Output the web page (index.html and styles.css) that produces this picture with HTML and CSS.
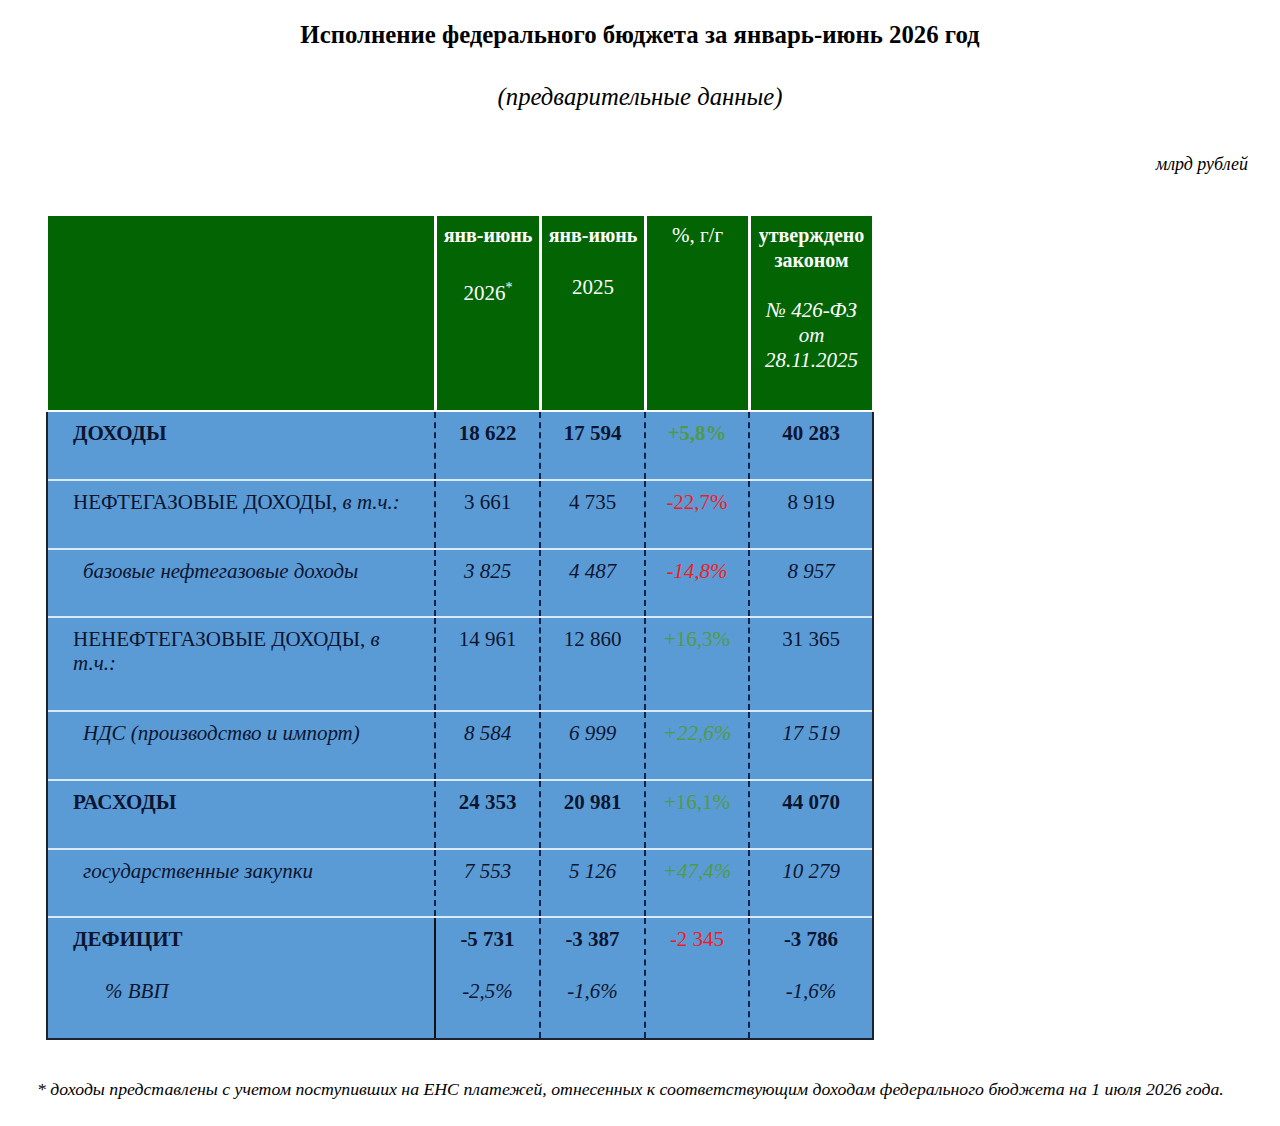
FILE: index.html
```html
<!DOCTYPE html>
<html lang="ru">
<head>
<meta charset="utf-8">
<title>Исполнение федерального бюджета</title>
<link rel="stylesheet" href="styles.css">
</head>
<body>
<div class="page">
  <h1 class="title">Исполнение федерального бюджета за январь-июнь 2026 год</h1>
  <p class="subtitle">(предварительные данные)</p>
  <p class="units">млрд рублей</p>

  <div class="table">
    <div class="thead">
      <div class="hcell"></div>
      <div class="hcell">
        <div class="hb">янв-июнь</div>
        <div class="hyear y26">2026<sup class="ast">*</sup></div>
      </div>
      <div class="hcell">
        <div class="hb">янв-июнь</div>
        <div class="hyear y25">2025</div>
      </div>
      <div class="hcell">
        <div class="hr">%, г/г</div>
      </div>
      <div class="hcell">
        <div class="hb">утверждено</div>
        <div class="hb">законом</div>
        <div class="hi first">№ 426-ФЗ</div>
        <div class="hi">от</div>
        <div class="hi">28.11.2025</div>
      </div>
    </div>

    <div class="tbody">
      <div class="row bold">
        <div class="c name">ДОХОДЫ</div>
        <div class="c num">18 622</div>
        <div class="c num">17 594</div>
        <div class="c num up">+5,8%</div>
        <div class="c num">40 283</div>
      </div>
      <div class="row">
        <div class="c name">НЕФТЕГАЗОВЫЕ ДОХОДЫ, <em>в т.ч.:</em></div>
        <div class="c num">3 661</div>
        <div class="c num">4 735</div>
        <div class="c num down">-22,7%</div>
        <div class="c num">8 919</div>
      </div>
      <div class="row italic short">
        <div class="c name sub">базовые нефтегазовые доходы</div>
        <div class="c num">3 825</div>
        <div class="c num">4 487</div>
        <div class="c num down">-14,8%</div>
        <div class="c num">8 957</div>
      </div>
      <div class="row tall">
        <div class="c name">НЕНЕФТЕГАЗОВЫЕ ДОХОДЫ, <em>в</em><br><em>т.ч.:</em></div>
        <div class="c num">14 961</div>
        <div class="c num">12 860</div>
        <div class="c num up">+16,3%</div>
        <div class="c num">31 365</div>
      </div>
      <div class="row italic">
        <div class="c name sub">НДС (производство и импорт)</div>
        <div class="c num">8 584</div>
        <div class="c num">6 999</div>
        <div class="c num up">+22,6%</div>
        <div class="c num">17 519</div>
      </div>
      <div class="row bold">
        <div class="c name">РАСХОДЫ</div>
        <div class="c num">24 353</div>
        <div class="c num">20 981</div>
        <div class="c num up regular">+16,1%</div>
        <div class="c num">44 070</div>
      </div>
      <div class="row italic short">
        <div class="c name sub">государственные закупки</div>
        <div class="c num">7 553</div>
        <div class="c num">5 126</div>
        <div class="c num up">+47,4%</div>
        <div class="c num">10 279</div>
      </div>
      <div class="row deficit">
        <div class="c name">
          <div class="strong">ДЕФИЦИТ</div>
          <div class="second gdp">% ВВП</div>
        </div>
        <div class="c num solid">
          <div class="strong">-5 731</div>
          <div class="second">-2,5%</div>
        </div>
        <div class="c num">
          <div class="strong">-3 387</div>
          <div class="second">-1,6%</div>
        </div>
        <div class="c num">
          <div class="down">-2 345</div>
          <div class="second"></div>
        </div>
        <div class="c num">
          <div class="strong">-3 786</div>
          <div class="second">-1,6%</div>
        </div>
      </div>
    </div>
  </div>

  <p class="note">* доходы представлены с учетом поступивших на ЕНС платежей, отнесенных к соответствующим доходам федерального бюджета на 1 июля 2026 года.</p>
</div>
</body>
</html>
```

FILE: styles.css
```css
html, body {
  margin: 0;
  padding: 0;
  background: #ffffff;
}

.page {
  width: 1280px;
  font-family: "Liberation Serif", "Times New Roman", serif;
  color: #000000;
}

.title {
  margin: 21px 0 0 0;
  font-size: 24.8px;
  line-height: 28px;
  font-weight: bold;
  text-align: center;
}

.subtitle {
  margin: 34px 0 0 0;
  font-size: 24.7px;
  line-height: 28px;
  font-style: italic;
  text-align: center;
}

.units {
  margin: 42px 0 0 0;
  padding-right: 32px;
  font-size: 18px;
  line-height: 22px;
  font-style: italic;
  text-align: right;
}

.table {
  margin: 41px 0 0 46px;
  width: 828px;
}

.thead {
  display: grid;
  grid-template-columns: 386px 102px 102px 101px 121px;
  column-gap: 3px;
  height: 194px;
  margin: 0 2px 2px 2px;
}

.hcell {
  background: #036403;
  color: #ffffff;
  text-align: center;
  padding-top: 7px;
}

.hb {
  font-size: 20px;
  line-height: 25px;
  font-weight: bold;
}

.hr {
  font-size: 21px;
  line-height: 25px;
}

.hi {
  font-size: 21px;
  line-height: 25px;
  font-style: italic;
}

.hi.first {
  margin-top: 25px;
}

.hyear {
  font-size: 21px;
  line-height: 25px;
}

.y26 {
  margin-top: 33px;
}

.y25 {
  margin-top: 27px;
}

.ast {
  font-size: 14px;
  line-height: 0;
  vertical-align: 8px;
}

.tbody {
  background: #5b9bd5;
  border: 2px solid #1b2332;
  border-top: none;
  color: #0b1530;
}

.row {
  display: grid;
  grid-template-columns: 386px 105px 105px 104px 124px;
  height: 69px;
  box-sizing: border-box;
  border-bottom: 2px solid #dbeaf8;
  font-size: 21px;
  line-height: 24px;
}

.row.short {
  height: 68px;
}

.row.tall {
  height: 94px;
}

.row.deficit {
  height: 120px;
  border-bottom: none;
}

.row.bold {
  font-weight: bold;
}

.row.italic {
  font-style: italic;
}

.c {
  padding-top: 9px;
}

.name {
  padding-left: 25px;
}

.name.sub {
  padding-left: 35px;
}

.num {
  text-align: center;
  border-left: 2px dashed #0f2247;
}

.num.solid {
  border-left: 2px solid #111111;
}

.up {
  color: #4f9a49;
}

.down {
  color: #ee1d25;
}

.regular {
  font-weight: normal;
}

.strong {
  font-weight: bold;
}

.second {
  margin-top: 28px;
  height: 24px;
  font-style: italic;
}

.gdp {
  padding-left: 32px;
}

.note {
  margin: 38px 0 0 37px;
  font-size: 17.75px;
  line-height: 22px;
  font-style: italic;
}
```
